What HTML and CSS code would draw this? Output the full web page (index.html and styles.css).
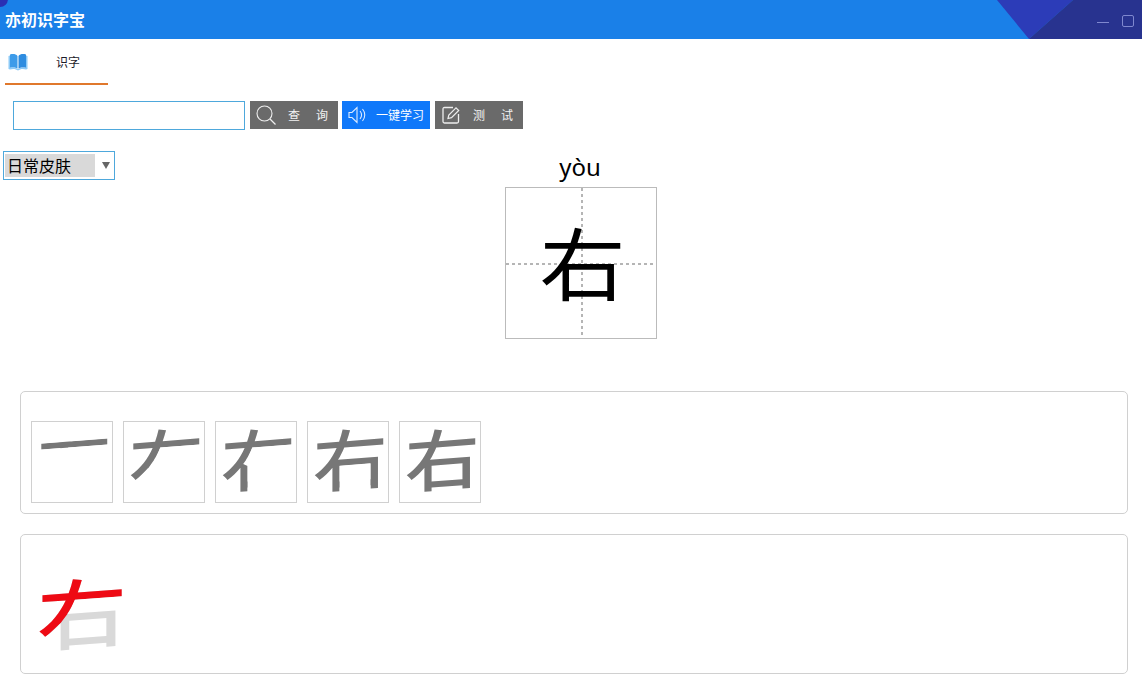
FILE: index.html
```html
<!DOCTYPE html>
<html lang="zh-CN">
<head>
    <meta charset="UTF-8">
    <title>亦初识字宝</title>
    <link rel="stylesheet" href="styles.css">
</head>
<body>

<header class="titlebar">
    <svg class="titlebar-art" viewBox="0 0 1142 39" width="1142" height="39" aria-hidden="true">
        <circle cx="0" cy="-1" r="8" fill="#2a2fb4"/>
        <polygon points="997,0 1073,0 1029,39" fill="#2c3cb8"/>
        <polygon points="1073,0 1142,0 1142,39 1029,39" fill="#28338f"/>
    </svg>
    <h1 class="app-name">亦初识字宝</h1>
    <div class="win-btns">
        <span class="win-min"></span>
        <span class="win-max"></span>
    </div>
</header>

<nav class="tabs">
    <a class="tab" href="#">
        <svg class="tab-icon" viewBox="0 0 20 18" width="20" height="18" aria-hidden="true">
            <path d="M0.500 3 V16 L2 16.500 C5 15.500 8 16 10 17.500 C12 16 15 15.500 18 16.500 L19.500 16 V3 L18 2.500 V15 C15 14.500 12 15 10 16 C8 15 5 14.500 2 15 V2.500 Z" fill="#8ccaf7"/>
            <path d="M2 1.500 C5 0.500 8 1 9.500 3 V15.500 C8 14.500 5 14 2 14.800 Z" fill="#3d9be9"/>
            <path d="M18 1.500 C15 0.500 12 1 10.500 3 V15.500 C12 14.500 15 14 18 14.800 Z" fill="#2e8ce0"/>
        </svg>
        <span class="tab-label">识字</span>
    </a>
</nav>

<form class="search-row" onsubmit="return false">
    <input class="search-input" type="text">
    <button class="btn" type="button">
        <svg class="btn-icon" viewBox="0 0 20 20" width="20" height="20" aria-hidden="true">
            <circle cx="8.500" cy="8.500" r="7.500" fill="none" stroke="#eee" stroke-width="1.100"/>
            <path d="M14 14 L19.500 19.500" stroke="#eee" stroke-width="1.200"/>
        </svg>
        <span class="btn-text btn-text-query">查询</span>
    </button>
    <button class="btn btn-blue" type="button">
        <svg class="btn-icon btn-icon-sound" viewBox="0 0 18 18" width="18" height="18" aria-hidden="true">
            <path d="M1 6.500 H4 L9 1.500 V16.500 L4 11.500 H1 Z" fill="none" stroke="#dcebff" stroke-width="1.100"/>
            <path d="M12 5 C14 7.500 14 10.500 12 13" fill="none" stroke="#dcebff" stroke-width="1.100"/>
            <path d="M14.500 3 C17.500 6.500 17.500 11.500 14.500 15" fill="none" stroke="#dcebff" stroke-width="1.100"/>
        </svg>
        <span class="btn-text">一键学习</span>
    </button>
    <button class="btn btn-test" type="button">
        <svg class="btn-icon btn-icon-edit" viewBox="0 0 18 18" width="18" height="18" aria-hidden="true">
            <path d="M11 1.500 H2.500 Q1 1.500 1 3 V15.500 Q1 17 2.500 17 H15 Q16.500 17 16.500 15.500 V8" fill="none" stroke="#eee" stroke-width="1.300"/>
            <path d="M6 12.500 L6.800 9 L14 1.800 L16.700 4.500 L9.500 11.700 Z" fill="none" stroke="#eee" stroke-width="1.200"/>
        </svg>
        <span class="btn-text btn-text-test">测试</span>
    </button>
</form>

<section class="stage">
    <div class="skin-select">
        <span class="skin-value">日常皮肤</span>
        <span class="skin-arrow"></span>
    </div>
    <div class="char-col">
        <div class="pinyin">yòu</div>
        <div class="char-box"><span class="char-big">右</span></div>
    </div>
</section>

<section class="panel panel-strokes">
    <div class="frame"><span class="glyph clip-1">右</span></div>
    <div class="frame"><span class="glyph clip-2">右</span></div>
    <div class="frame"><span class="glyph clip-3">右</span></div>
    <div class="frame"><span class="glyph clip-4">右</span></div>
    <div class="frame"><span class="glyph">右</span></div>
</section>

<section class="panel panel-anim">
    <div class="anim">
        <span class="glyph glyph-anim glyph-rest">右</span>
        <span class="glyph glyph-anim glyph-red clip-2">右</span>
    </div>
</section>

</body>
</html>
```

FILE: styles.css
```css
:root {
    font-family: "Noto Sans CJK SC", "Liberation Sans", sans-serif;
}

body {
    margin: 0;
    background: #fff;
    color: #000;
}

/* title bar */
.titlebar {
    position: relative;
    display: flex;
    align-items: center;
    justify-content: space-between;
    height: 39px;
    background-color: #1a80e8;
    overflow: hidden;
}

.titlebar-art {
    position: absolute;
    left: 0;
    top: 0;
}

.app-name {
    position: relative;
    margin: 0 0 0 5px;
    font-size: 16px;
    line-height: 39px;
    font-weight: 700;
    color: #fff;
}

.win-btns {
    position: relative;
    display: flex;
    align-items: center;
    gap: 13px;
    margin-right: 8px;
    padding-top: 2px;
}

.win-min {
    width: 12px;
    height: 1px;
    margin-top: 3px;
    background: #7f88cf;
}

.win-max {
    width: 10px;
    height: 10px;
    border: 1px solid #7f88cf;
    border-radius: 2px;
}

/* tabs */
.tabs {
    display: flex;
    padding-left: 5px;
}

.tab {
    display: flex;
    align-items: center;
    width: 103px;
    height: 44px;
    border-bottom: 2px solid #e0782c;
    color: #1a1a2a;
    text-decoration: none;
}

.tab-icon {
    margin-left: 3px;
    margin-top: 2px;
}

.tab-label {
    margin-left: 28px;
    font-size: 12px;
}

/* search */
.search-row {
    display: flex;
    align-items: flex-start;
    margin: 16px 0 0 13px;
}

.search-input {
    box-sizing: border-box;
    width: 232px;
    height: 29px;
    margin: 0 5px 0 0;
    padding: 0 4px;
    border: 1px solid #4ea8dc;
    outline: none;
}

.btn {
    display: flex;
    align-items: center;
    width: 88px;
    height: 28px;
    margin-right: 4px;
    padding: 0 0 0 6px;
    border: 0;
    background: #6a6a6a;
    color: #f2f2f2;
    font: inherit;
    font-size: 12px;
}

.btn-test {
    margin-left: 1px;
    padding-left: 7px;
}

.btn-blue {
    background: #0f78fa;
    color: #fff;
}

.btn-icon {
    flex: none;
}

.btn-text {
    margin-left: 10px;
    margin-bottom: 2px;
    white-space: nowrap;
}

.btn-text-query {
    margin-left: 12px;
    letter-spacing: 16px;
}

.btn-text-test {
    margin-left: 13px;
    letter-spacing: 16px;
}

/* select + big character */
.stage {
    display: flex;
    align-items: flex-start;
    margin: 21px 0 0 3px;
}

.skin-select {
    box-sizing: border-box;
    display: flex;
    align-items: center;
    width: 112px;
    height: 29px;
    padding-left: 1px;
    border: 1px solid #4ea8dc;
}

.skin-value {
    width: 90px;
    padding-left: 2px;
    box-sizing: border-box;
    background: #d9d9d9;
    font-size: 16px;
    line-height: 23px;
}

.skin-arrow {
    width: 0;
    height: 0;
    margin-left: 7px;
    border-left: 4px solid transparent;
    border-right: 4px solid transparent;
    border-top: 7px solid #666;
}

.char-col {
    margin-left: 390px;
    margin-top: 1px;
    width: 152px;
}

.pinyin {
    height: 35px;
    padding-right: 2px;
    box-sizing: border-box;
    font-family: "Noto Sans", sans-serif;
    font-size: 24px;
    line-height: 29px;
    text-align: center;
}

.char-box {
    box-sizing: border-box;
    display: flex;
    align-items: center;
    justify-content: center;
    width: 152px;
    height: 152px;
    border: 1px solid #bbb;
    background-image:
        repeating-linear-gradient(to right, #b5b5b5 0 3px, transparent 3px 6px),
        repeating-linear-gradient(to bottom, #b5b5b5 0 3px, transparent 3px 6px);
    background-size: 100% 2px, 2px 100%;
    background-position: 0 75px, 75px 0;
    background-repeat: no-repeat;
}

.char-big {
    display: block;
    font-size: 86px;
    line-height: 1;
    transform: translate(1.500px, -2px) scaleY(0.92);
}

/* stroke panels */
.panel {
    box-sizing: border-box;
    margin-left: 20px;
    width: 1108px;
    border: 1px solid #d0d0d0;
    border-radius: 5px;
}

.panel-strokes {
    display: flex;
    gap: 10px;
    height: 123px;
    margin-top: 52px;
    padding: 29px 0 0 10px;
}

.panel-anim {
    height: 140px;
    margin-top: 20px;
    padding: 36px 0 0 16px;
}

.frame {
    box-sizing: border-box;
    display: flex;
    align-items: center;
    justify-content: center;
    width: 82px;
    height: 82px;
    border: 1px solid #d0d0d0;
}

.glyph {
    display: block;
    flex: none;
    width: 1em;
    height: 1em;
    font-size: 72px;
    font-weight: 500;
    line-height: 1;
    color: #777;
    transform: translate(3%, -8%) scale(1.04, 0.92) skewY(-5deg);
}

.anim {
    display: grid;
    width: 90px;
    height: 90px;
}

.glyph-anim {
    grid-area: 1 / 1;
    font-size: 90px;
    transform: translateY(-7%) scale(1, 0.84) skewY(-5deg);
}

.glyph-rest {
    color: #d9d9d9;
}

.glyph-red {
    color: #ee0a14;
}

/* show only the strokes written so far */
.clip-1 {
    clip-path: polygon(0 27.1%, 100% 27.1%, 100% 36.1%, 0 36.1%);
}

.clip-2 {
    clip-path: polygon(0 0, 100% 0, 100% 36.2%, 42.2% 36.2%, 37.2% 50%, 33.8% 54.2%, 26.3% 65.5%, 9.5% 83%, 0 83%);
}

.clip-3 {
    clip-path: polygon(0 0, 100% 0, 100% 36.2%, 42.2% 36.2%, 37.2% 50%, 33.8% 54.2%, 30% 60%, 35.9% 63.4%, 35.9% 115%, 0 115%);
}

.clip-4 {
    clip-path: polygon(0 0, 100% 0, 100% 115%, 77.1% 115%, 77.1% 63.4%, 35.9% 63.4%, 35.9% 115%, 0 115%);
}
```
